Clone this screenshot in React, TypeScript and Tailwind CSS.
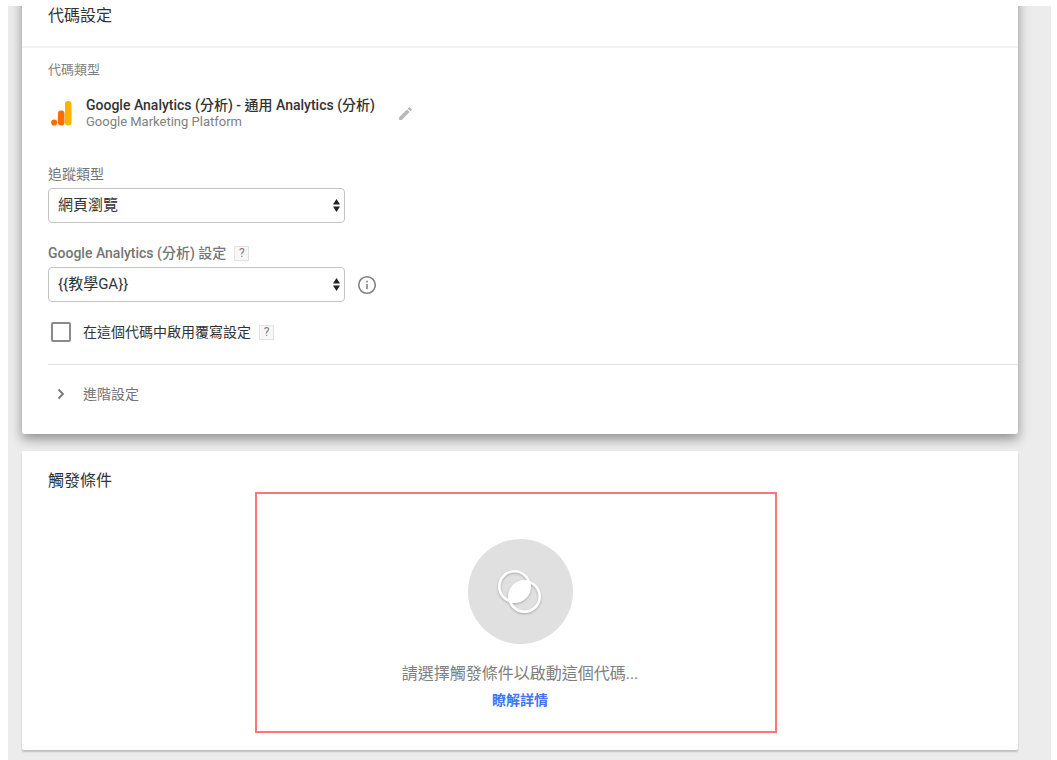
import type { ReactNode } from 'react';

function AnalyticsLogo() {
  return (
    <svg width="21" height="25" viewBox="0 0 21 25" aria-hidden="true">
      <rect x="14" y="0" width="6.500" height="24.500" rx="3" fill="#ffb300" />
      <rect x="7" y="9.500" width="6.500" height="15" rx="3" fill="#ff6d00" />
      <circle cx="3.200" cy="21.500" r="3.100" fill="#ff6d00" />
    </svg>
  );
}

function PencilIcon() {
  return (
    <svg width="17" height="17" viewBox="0 0 24 24" fill="#b8b8b8" aria-hidden="true">
      <path d="M3 17.250V21h3.750L17.810 9.940l-3.750-3.750L3 17.250zM20.710 7.040a1 1 0 0 0 0-1.410l-2.340-2.340a1 1 0 0 0-1.410 0l-1.830 1.830 3.750 3.750 1.830-1.830z" />
    </svg>
  );
}

function InfoIcon() {
  return (
    <svg width="20" height="20" viewBox="0 0 20 20" aria-hidden="true">
      <circle cx="10" cy="10" r="8.300" fill="none" stroke="#808080" strokeWidth="1.600" />
      <path d="M9.200 9h1.600v5H9.200zM9.200 5.800h1.600v1.600H9.200z" fill="#808080" />
    </svg>
  );
}

function TriggerIcon() {
  return (
    <svg width="52" height="52" viewBox="0 0 52 52" className="drop-shadow-[0_1px_1px_rgba(0,0,0,0.25)]" aria-hidden="true">
      <g fill="none" stroke="#fff" strokeWidth="2.600">
        <circle cx="20.500" cy="20.500" r="15.200" />
        <circle cx="30.500" cy="30.500" r="15.200" />
      </g>
      <path d="M34.850 16.150A15 15 0 0 1 16.150 34.850A15 15 0 0 1 34.850 16.150z" fill="#fff" />
    </svg>
  );
}

function HelpBadge() {
  return (
    <button
      type="button"
      aria-label="說明"
      className="flex h-[15px] w-[15px] items-center justify-center border border-[#e2e2e2] bg-[#f7f7f7] text-[12px] leading-none text-[#808080]"
    >
      ?
    </button>
  );
}

function SelectBox({ id, value }: { id: string; value: string }) {
  return (
    <div className="relative w-[297px]">
      <select
        id={id}
        defaultValue={value}
        className="block h-[35px] w-full appearance-none rounded-[4px] border border-[#c4c4c4] bg-white pl-[9px] pr-6 text-[15px] text-[#333]"
      >
        <option>{value}</option>
      </select>
      <svg width="7" height="13" viewBox="0 0 7 13" className="pointer-events-none absolute right-[5px] top-[11px]" aria-hidden="true">
        <path d="M3.500 0L7 5.500H0zM3.500 13L0 7.500h7z" fill="#222" />
      </svg>
    </div>
  );
}

function Card({ className, children }: { className: string; children: ReactNode }) {
  return <section className={`rounded-[2px] bg-white ${className}`}>{children}</section>;
}

export default function App() {
  return (
    <div className="min-h-screen bg-white pl-2 pr-[6px] pt-[6px] font-[Roboto,'Noto_Sans_CJK_TC',sans-serif]">
      <main className="min-h-[calc(100vh-6px)] overflow-hidden bg-[#ececec] pb-[10px] pl-[14px] pr-[33px]">
        {/* Tag configuration */}
        <Card className="-mt-5 pt-5 shadow-[0_5px_12px_rgba(0,0,0,0.4)]">
          <h2 className="border-b-2 border-[#f2f2f2] pb-5 pl-[26px] text-base leading-5 text-[#333]">代碼設定</h2>

          <div className="pb-[30px] pl-[26px] pt-3">
            <p className="text-[13px] leading-5 text-[#808080]">代碼類型</p>

            <div className="mt-4 flex items-center">
              <div className="ml-[3px] w-[35px]">
                <AnalyticsLogo />
              </div>
              <div>
                <p className="text-[14px] font-medium leading-[18px] text-[#333]">
                  Google Analytics (分析) - 通用 Analytics (分析)
                </p>
                <p className="text-[13px] leading-4 text-[#808080]">Google Marketing Platform</p>
              </div>
              <button type="button" aria-label="編輯" className="ml-[22px]">
                <PencilIcon />
              </button>
            </div>

            <label htmlFor="track-type" className="mt-[34px] block text-[14px] leading-5 text-[#757575]">
              追蹤類型
            </label>
            <div className="mt-1">
              <SelectBox id="track-type" value="網頁瀏覽" />
            </div>

            <div className="mt-5 flex items-center gap-2">
              <label htmlFor="ga-settings" className="text-[14px] font-medium leading-5 text-[#757575]">
                Google Analytics (分析) 設定
              </label>
              <HelpBadge />
            </div>
            <div className="mt-1 flex items-center gap-3">
              <SelectBox id="ga-settings" value="{{教學GA}}" />
              <button type="button" aria-label="資訊">
                <InfoIcon />
              </button>
            </div>

            <div className="mt-5 flex items-center">
              <input
                id="override"
                type="checkbox"
                className="ml-[3px] h-5 w-5 appearance-none rounded-[2px] border-2 border-[#8a8a8a] bg-white checked:bg-[#8a8a8a]"
              />
              <label htmlFor="override" className="ml-3 mr-2 text-[14px] leading-5 text-[#333]">
                在這個代碼中啟用覆寫設定
              </label>
              <HelpBadge />
            </div>

            <div className="mt-[22px] border-t border-[#e4e4e4] pt-[19px]">
              <button type="button" className="flex items-center text-[14px] leading-5 text-[#757575]">
                <svg width="8" height="12" viewBox="0 0 8 12" className="ml-[9px] mr-[18px]" aria-hidden="true">
                  <path d="M1.500 1.500L6 6l-4.500 4.500" fill="none" stroke="#757575" strokeWidth="1.800" />
                </svg>
                進階設定
              </button>
            </div>
          </div>
        </Card>

        {/* Triggering */}
        <Card className="relative mt-[17px] pb-[17px] pt-5 shadow-[0_2px_2px_rgba(0,0,0,0.2)]">
          <h2 className="pl-[26px] text-base leading-5 text-[#333]">觸發條件</h2>
          <div className="mt-px flex justify-center pr-2">
            <div className="flex w-full max-w-[522px] flex-col items-center border-2 border-[#ff7474] pb-[21px] pl-2 pt-[45px]">
              <button
                type="button"
                aria-label="選擇觸發條件"
                className="flex h-[105px] w-[105px] items-center justify-center rounded-full bg-[#e0e0e0]"
              >
                <TriggerIcon />
              </button>
              <p className="mt-[18px] text-base leading-6 text-[#808080]">請選擇觸發條件以啟動這個代碼...</p>
              <a href="#" className="mt-1 text-[14px] font-bold leading-5 text-[#4272f5]">
                瞭解詳情
              </a>
            </div>
          </div>
        </Card>
      </main>
    </div>
  );
}
